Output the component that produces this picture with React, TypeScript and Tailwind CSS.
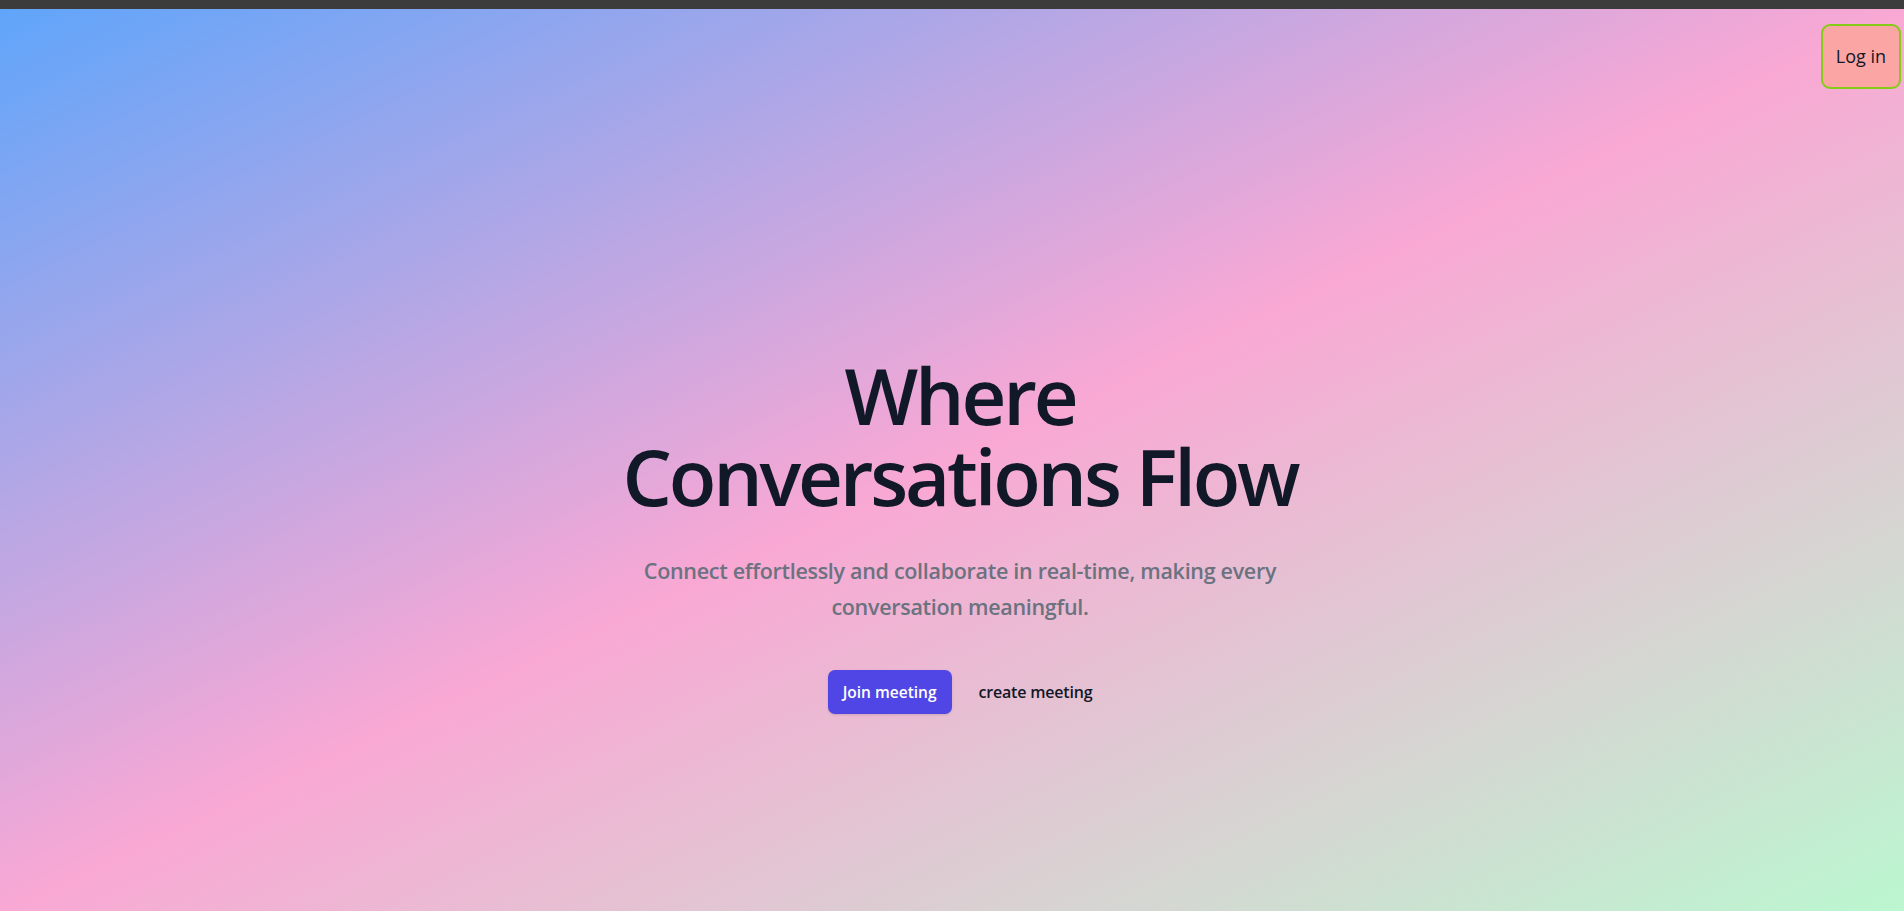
import React from 'react'

const App = () => {
    return (
        <div className="min-h-screen flex flex-col font-['Open_Sans',sans-serif]">
            <div className="h-[9px] bg-[#3c3c3c]" />

            <div className="flex-1 bg-[linear-gradient(to_bottom_right,#60a5fa,#f9a8d4,#bbf7d0)]">
                <div className="flex justify-end pt-[15px] pr-[3px]">
                    <button className="h-[65px] w-[80px] rounded-[9px] border-2 border-[#84cc16] bg-[#fca5a5] text-[18px] font-medium text-[#111827]">
                        Log in
                    </button>
                </div>

                <div className="flex justify-center pl-[16px] mt-[266px]">
                    <div className="max-w-[756px] text-center">
                        <h1 className="text-[78px] leading-[81px] font-semibold tracking-[-3.2px] text-[#111827]">
                            Where
                            <br />
                            Conversations Flow
                        </h1>
                        <p className="mt-[36px] text-[21.5px] leading-[36px] font-semibold tracking-[-0.3px] text-[#6b7280]">
                            Connect effortlessly and collaborate in real-time, making every conversation meaningful.
                        </p>
                        <div className="mt-[45px] flex items-center justify-center gap-x-[27px]">
                            <button className="rounded-[7px] bg-[#4f46e5] px-[15px] py-[11px] text-[15.5px] leading-[22px] font-semibold text-white shadow-sm">
                                Join meeting
                            </button>
                            <a href="#" className="text-[16px] leading-[27px] font-semibold tracking-[-0.2px] text-[#111827]">
                                create meeting
                            </a>
                        </div>
                    </div>
                </div>
            </div>
        </div>
    )
}

export default App
